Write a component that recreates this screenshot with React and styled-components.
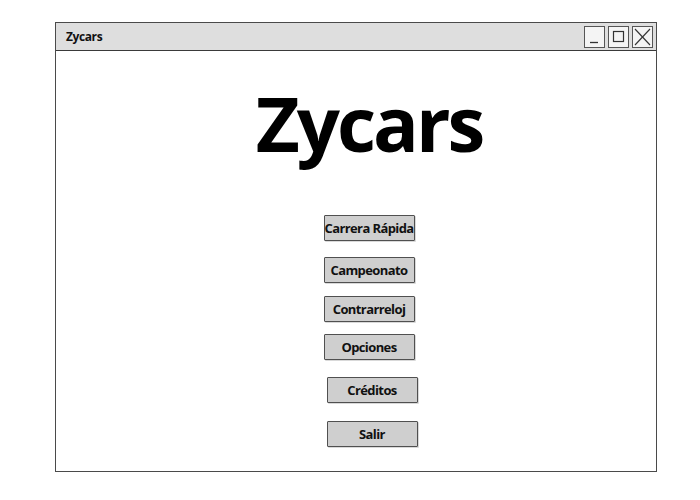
import React from 'react'
import styled, { createGlobalStyle } from 'styled-components'

const GlobalStyle = createGlobalStyle`
  html, body {
    margin: 0;
    padding: 0;
    background: #ffffff;
  }
  body {
    font-family: "Open Sans", "Noto Sans", sans-serif;
  }
`

const menu = [
  { label: 'Carrera Rápida', top: 0, shift: 0 },
  { label: 'Campeonato', top: 16, shift: 0 },
  { label: 'Contrarreloj', top: 13, shift: 0 },
  { label: 'Opciones', top: 12, shift: 0 },
  { label: 'Créditos', top: 17, shift: 3 },
  { label: 'Salir', top: 18, shift: 3 },
]

function App() {
  return (
    <Page>
      <GlobalStyle />
      <Window>
        <TitleBar>
          <TitleText>Zycars</TitleText>
          <Controls>
            <CtrlButton>
              <svg width="19" height="20" viewBox="0 0 19 20">
                <line x1="5" y1="15.5" x2="13" y2="15.5" stroke="#333" strokeWidth="1.3" />
              </svg>
            </CtrlButton>
            <CtrlButton>
              <svg width="19" height="20" viewBox="0 0 19 20">
                <rect x="4.5" y="4.5" width="10" height="10" fill="none" stroke="#333" strokeWidth="1.2" />
              </svg>
            </CtrlButton>
            <CtrlButton>
              <svg width="19" height="20" viewBox="0 0 19 20">
                <line x1="2" y1="2" x2="17" y2="18" stroke="#333" strokeWidth="1.1" />
                <line x1="17" y1="2" x2="2" y2="18" stroke="#333" strokeWidth="1.1" />
              </svg>
            </CtrlButton>
          </Controls>
        </TitleBar>
        <Content>
          <BigTitle>Zycars</BigTitle>
          <Menu>
            {menu.map((m) => (
              <MenuButton key={m.label} $top={m.top} $shift={m.shift}>
                {m.label}
              </MenuButton>
            ))}
          </Menu>
        </Content>
      </Window>
    </Page>
  )
}

export default App

const Page = styled.div`
  padding: 22px 0 0 55px;
`

const Window = styled.div`
  width: 600px;
  height: 448px;
  border: 1px solid #4a4a4a;
  display: flex;
  flex-direction: column;
  background: #fff;
`

const TitleBar = styled.div`
  height: 27px;
  background: #dedede;
  border-bottom: 1px solid #3a3a3a;
  display: flex;
  align-items: center;
  justify-content: space-between;
  padding: 0 3px 0 10px;
`

const TitleText = styled.div`
  font-weight: 700;
  font-size: 12px;
  letter-spacing: -0.4px;
  color: #111;
`

const Controls = styled.div`
  display: flex;
  gap: 3px;
`

const CtrlButton = styled.div`
  width: 19px;
  height: 20px;
  border: 1px solid #555;
  background: #f4f4f4;
  display: flex;
`

const Content = styled.div`
  flex: 1;
  display: flex;
  flex-direction: column;
  align-items: center;
  padding-left: 26px;
`

const BigTitle = styled.h1`
  margin: 34px 0 0;
  font-weight: 700;
  font-size: 76px;
  line-height: 1;
  letter-spacing: -3px;
  color: #000;
`

const Menu = styled.div`
  display: flex;
  flex-direction: column;
  align-items: center;
  margin-top: 54px;
`

const MenuButton = styled.div`
  width: 89px;
  height: 24px;
  margin-top: ${(p) => p.$top}px;
  margin-left: ${(p) => p.$shift * 2}px;
  box-sizing: content-box;
  border: 1px solid #505050;
  border-radius: 1px;
  background: #cfcfcf;
  box-shadow: 1px 1px 0 rgba(0, 0, 0, 0.15);
  display: flex;
  align-items: center;
  justify-content: center;
  font-weight: 700;
  font-size: 13px;
  letter-spacing: -0.6px;
  white-space: nowrap;
  color: #111;
`
